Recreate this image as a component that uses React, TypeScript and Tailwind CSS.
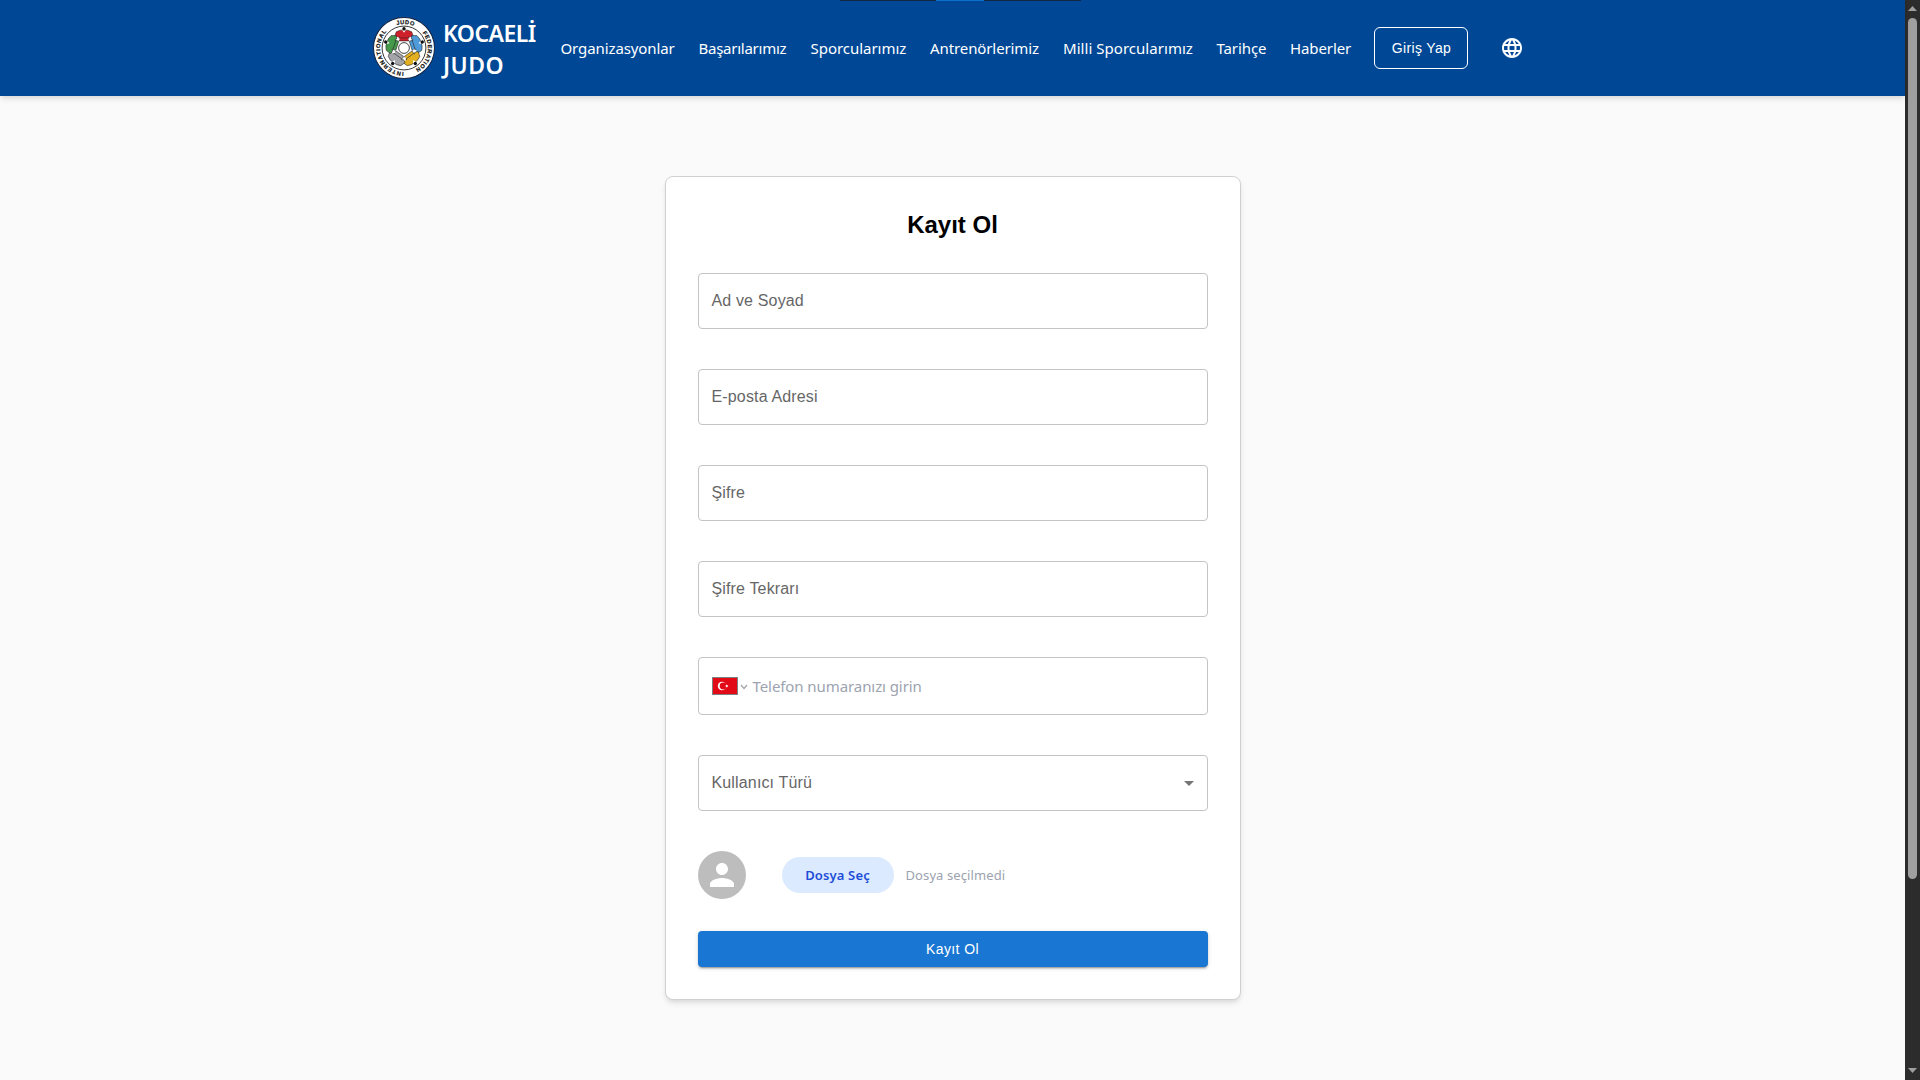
import { MdLanguage, MdPerson, MdArrowDropDown } from "react-icons/md";

const navItems = [
  { label: "Organizasyonlar", width: "w-[114px]", tracking: "tracking-[-0.1px]" },
  { label: "Başarılarımız", width: "w-[88px]", tracking: "tracking-[-0.25px]" },
  { label: "Sporcularımız", width: "w-[95.5px]", tracking: "tracking-[-0.03px]" },
  { label: "Antrenörlerimiz", width: "w-[109px]", tracking: "tracking-[-0.1px]" },
  { label: "Milli Sporcularımız", width: "w-[129.5px]", tracking: "tracking-[0.04px]" },
  { label: "Tarihçe", width: "w-[49.5px]", tracking: "tracking-[-0.1px]" },
  { label: "Haberler", width: "w-[60px]", tracking: "tracking-[-0.1px]" },
];

const judoka = [
  { angle: 0, color: "#cf1f2b" },
  { angle: 72, color: "#4f9bd9" },
  { angle: 144, color: "#e3b021" },
  { angle: 216, color: "#a3a5a8" },
  { angle: 288, color: "#45994a" },
];

function Logo() {
  return (
    <svg viewBox="-92 -92 184 184" className="size-[62px] shrink-0">
      <circle r="90.5" fill="#fff" stroke="#16233f" strokeWidth="3" />
      <circle r="65" fill="none" stroke="#111" strokeWidth="2.5" />
      {judoka.map(({ angle, color }) => (
        <g key={angle} transform={`rotate(${angle})`}>
          <path
            d="M-11 -53 L11 -53 L23 -48 L28 -33 L19 -29 L14 -33 L14 -21 L-14 -21 L-14 -33 L-19 -29 L-28 -33 L-23 -48 Z"
            fill={color}
            stroke="#222"
            strokeWidth="1.6"
          />
          <path d="M-5 -53 L0 -45 L5 -53 Z" fill="#fff" />
          <path d="M-14 -30 H14" stroke="#222" strokeWidth="1.6" />
          <path d="M-24 -29 L-19 -21 M24 -29 L19 -21" stroke="#fff" strokeWidth="5" />
          <circle cy="-57" r="5" fill="#111" />
        </g>
      ))}
      <circle r="16" fill="#fff" stroke="#222" strokeWidth="2.5" />
      <path id="logo-ring" d="M0 71 A71 71 0 0 1 0 -71 A71 71 0 0 1 0 71" fill="none" />
      <g
        fontFamily="Liberation Sans"
        fontSize="17"
        fontWeight="700"
        fill="#111"
        stroke="#111"
        strokeWidth="0.6"
      >
        <text letterSpacing="2.2">
          <textPath href="#logo-ring" startOffset="1">INTERNATIONAL</textPath>
        </text>
        <text letterSpacing="1.3">
          <textPath href="#logo-ring" startOffset="201">JUDO</textPath>
        </text>
        <text letterSpacing="1.7">
          <textPath href="#logo-ring" startOffset="285">FEDERATION</textPath>
        </text>
      </g>
    </svg>
  );
}

function Field({ label }: { label: string }) {
  return (
    <div className="flex h-14 items-start rounded border border-[#c4c4c4] px-[13px] pt-[15px]">
      <span className="text-base leading-[23px] tracking-[0.15px] text-[#666]">{label}</span>
    </div>
  );
}

function TurkishFlag() {
  return (
    <svg viewBox="0 0 26 18" className="h-[18px] w-[26px]">
      <rect width="26" height="18" fill="#7d7f83" />
      <rect x="1" y="1" width="24" height="16" fill="#e30a17" />
      <circle cx="10" cy="9" r="4.2" fill="#fff" />
      <circle cx="11.1" cy="9" r="3.4" fill="#e30a17" />
      <path
        d="M12.9 9 L14.2 8.6 L14.2 7.2 L15 8.3 L16.3 7.9 L15.5 9 L16.3 10.1 L15 9.7 L14.2 10.8 L14.2 9.4 Z"
        fill="#fff"
      />
    </svg>
  );
}

function Header() {
  return (
    <header className="relative flex h-24 items-center bg-[#004896] pl-[373px] font-['Noto_Sans',sans-serif] text-white shadow-[0_4px_6px_-1px_rgba(0,0,0,0.1),0_2px_4px_-1px_rgba(0,0,0,0.06)]">
      <div className="absolute top-0 left-[840px] flex h-px w-[241px] justify-center bg-[#122744]">
        <div className="mr-[1px] h-px w-12 bg-[#0a6fd0]" />
      </div>
      <Logo />
      <div className="ml-[8px] flex w-[117.5px] flex-col pt-[2px] text-[23px] leading-8 font-semibold">
        <span className="tracking-[-0.55px]">KOCAELİ</span>
        <span className="tracking-[0.5px]">JUDO</span>
      </div>
      <nav className="flex gap-6 text-[15px] leading-6">
        {navItems.map((n) => (
          <a key={n.label} className={`${n.width} ${n.tracking} whitespace-nowrap`}>
            {n.label}
          </a>
        ))}
      </nav>
      <button className="ml-6 h-[42px] w-[94px] rounded-md border border-white pl-px font-['Liberation_Sans',sans-serif] text-sm tracking-[0.35px] whitespace-nowrap">
        Giriş Yap
      </button>
      <MdLanguage className="ml-8 size-6" />
    </header>
  );
}

function Scrollbar() {
  return (
    <div className="flex w-[15px] shrink-0 flex-col items-center bg-[#2c2c2c]">
      <svg viewBox="0 0 9 5" className="mt-[6px] h-[5px] w-[9px]">
        <path d="M4.5 0 L9 5 H0 Z" fill="#9f9f9f" />
      </svg>
      <div className="mt-[7px] h-[861px] w-[9px] rounded-full bg-[#9f9f9f]" />
      <svg viewBox="0 0 9 5" className="mt-auto mb-[7px] h-[5px] w-[9px]">
        <path d="M0 0 H9 L4.5 5 Z" fill="#9f9f9f" />
      </svg>
    </div>
  );
}

export default function App() {
  return (
    <div className="flex h-[1080px] w-[1920px] overflow-hidden bg-[#fafafa] font-['Liberation_Sans',sans-serif]">
      <div className="flex flex-1 flex-col">
        <Header />
        <main className="flex justify-center pt-20">
          <form className="flex h-[824px] w-[576px] flex-col rounded-lg border border-[#d1d1d1] bg-white px-8 pt-8 shadow-[0_4px_6px_-1px_rgba(0,0,0,0.1),0_2px_4px_-1px_rgba(0,0,0,0.06)]">
            <h1 className="mb-8 text-center text-2xl leading-8 font-bold text-black">Kayıt Ol</h1>
            <div className="flex flex-col gap-10">
              <Field label="Ad ve Soyad" />
              <Field label="E-posta Adresi" />
              <Field label="Şifre" />
              <Field label="Şifre Tekrarı" />
              <div className="flex h-[58px] items-center rounded border border-[#c4c4c4] px-[13px]">
                <TurkishFlag />
                <svg viewBox="0 0 8 6" className="mt-[2px] ml-[2.5px] h-[6px] w-[8px]">
                  <path d="M1 1 L4 4.4 L7 1" fill="none" stroke="#a3a7ad" strokeWidth="1.3" />
                </svg>
                <span className="ml-[4.5px] font-['Noto_Sans',sans-serif] text-[15px] leading-6 tracking-[-0.08px] text-[#9ca3af]">
                  Telefon numaranızı girin
                </span>
              </div>
              <div className="flex h-14 items-start justify-between rounded border border-[#c4c4c4] pt-[15px] pr-[6px] pl-[13px]">
                <span className="text-base leading-[23px] tracking-[0.15px] text-[#666]">
                  Kullanıcı Türü
                </span>
                <MdArrowDropDown className="size-6 text-[#757575]" />
              </div>
            </div>
            <div className="mt-10 flex items-center font-['Noto_Sans',sans-serif]">
              <div className="flex size-12 items-center justify-center rounded-full bg-[#bdbdbd]">
                <MdPerson className="size-9 text-white" />
              </div>
              <button
                type="button"
                className="ml-9 h-9 w-28 rounded-full bg-[#dbeafe] pt-px text-[13px] font-semibold tracking-[0.15px] text-[#1d4ed8]"
              >
                Dosya Seç
              </button>
              <span className="ml-3 pt-[2px] text-[13px] tracking-[0.1px] text-[#9ca3af]">
                Dosya seçilmedi
              </span>
            </div>
            <button
              type="button"
              className="mt-8 h-9 shrink-0 rounded bg-[#1976d2] text-sm tracking-[0.4px] text-white shadow-[0_3px_1px_-2px_rgba(0,0,0,0.2),0_2px_2px_0_rgba(0,0,0,0.14),0_1px_5px_0_rgba(0,0,0,0.12)]"
            >
              Kayıt Ol
            </button>
          </form>
        </main>
      </div>
      <Scrollbar />
    </div>
  );
}
